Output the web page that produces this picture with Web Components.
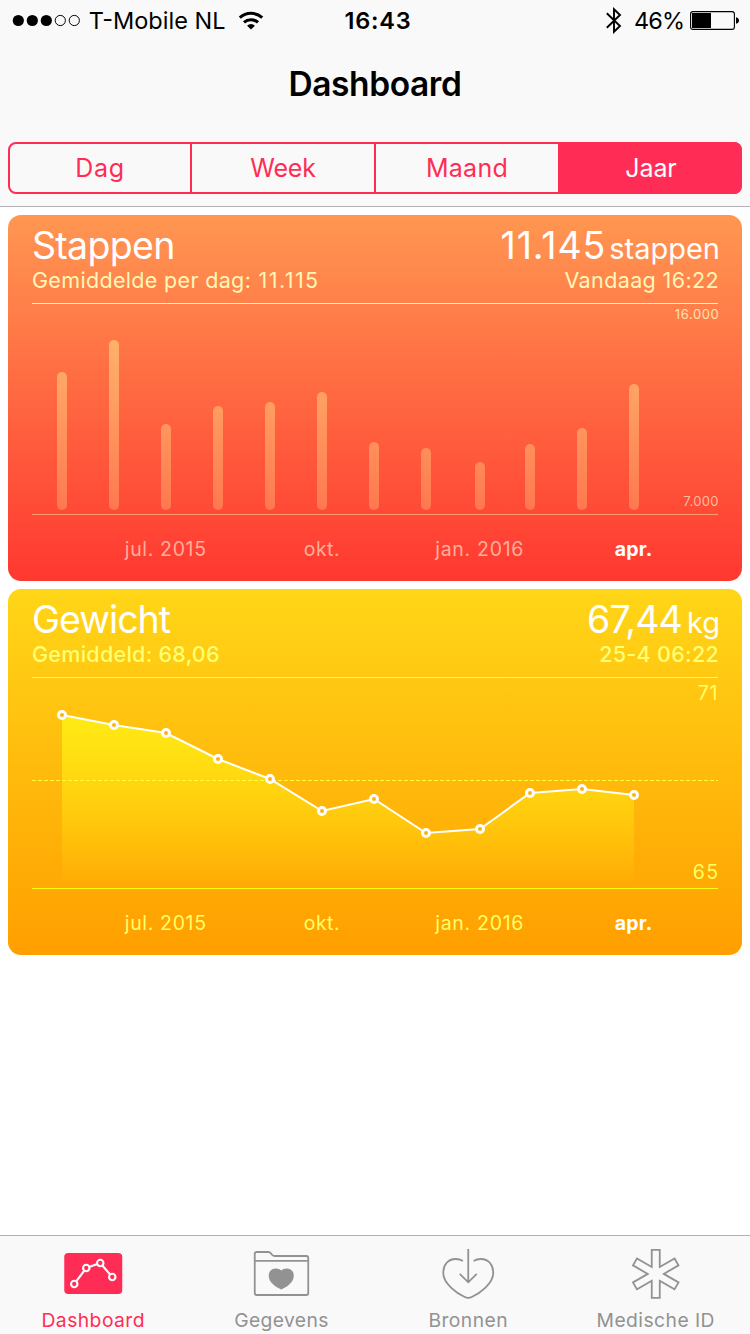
<!DOCTYPE html>
<html lang="nl">
<head>
  <meta charset="utf-8">
  <title>Dashboard</title>
  <style>
    body {
      margin: 0;
      background: #fff;
      font-family: Inter, "Liberation Sans", sans-serif;
    }
  </style>
</head>
<body>
  <health-app></health-app>

  <script>
    class StatusBar extends HTMLElement {
      constructor() {
        super();
        this.shadowDOM = this.attachShadow({mode: "open"});
      }
      connectedCallback() {
        this.render();
      }
      render() {
        this.shadowDOM.innerHTML = `
          <style>
            :host {
              display: grid;
              grid-template-columns: 1fr auto 1fr;
              align-items: center;
              height: 41px;
              padding: 0 11px 0 12px;
              font-size: 23.5px;
              line-height: 41px;
              color: #000;
            }
            div {
              display: flex;
              align-items: center;
            }
            svg {
              display: block;
              flex: none;
            }
            .carrier span {
              margin: 0 12.2px 0 7.8px;
            }
            .time {
              font-weight: 600;
              letter-spacing: .8px;
              margin-left: 5px;
            }
            .right {
              justify-content: flex-end;
            }
            .right span {
              letter-spacing: -0.8px;
              margin: 0 5.6px 0 12px;
            }
          </style>
          <div class="carrier">
            <svg width="69" height="13" viewBox="0 0 69 13">
              <circle cx="6.3" cy="6.5" r="5.6"/>
              <circle cx="20.3" cy="6.5" r="5.6"/>
              <circle cx="34.3" cy="6.5" r="5.6"/>
              <circle cx="48.3" cy="6.5" r="5.1" fill="none" stroke="#000"/>
              <circle cx="62.3" cy="6.5" r="5.1" fill="none" stroke="#000"/>
            </svg>
            <span>T-Mobile NL</span>
            <svg width="26" height="19" viewBox="0 0 26 19" fill="none" stroke="#000" stroke-width="3">
              <path d="M1.8 6.7A16.6 16.6 0 0 1 24.2 6.7"/>
              <path d="M6 11.4A10.4 10.4 0 0 1 20 11.4"/>
              <path d="M9.1 14.7A5.6 5.6 0 0 1 16.9 14.7L13 18.6Z" fill="#000" stroke="none"/>
            </svg>
          </div>
          <div class="time">16:43</div>
          <div class="right">
            <svg width="17" height="27" viewBox="0 0 17 27" fill="none" stroke="#000" stroke-width="1.9">
              <path d="M1.8 6.2L15 19L9 24.8V2.2L15 8L1.8 20.8"/>
            </svg>
            <span>46%</span>
            <svg width="49" height="19" viewBox="0 0 49 19">
              <rect x=".6" y=".6" width="43.8" height="17.8" rx="2.4" fill="none" stroke="#000" stroke-width="1.1"/>
              <rect x="2" y="2" width="19" height="15"/>
              <path d="M46 6.2Q49 7 49 9.5Q49 12 46 12.8Z"/>
            </svg>
          </div>
        `;
      }
    }
    customElements.define("status-bar", StatusBar);

    class PeriodPicker extends HTMLElement {
      constructor() {
        super();
        this.shadowDOM = this.attachShadow({mode: "open"});
      }
      connectedCallback() {
        this.render();
      }
      render() {
        this.shadowDOM.innerHTML = `
          <style>
            :host {
              display: grid;
              grid-template-columns: 180px 184px 184px 182px;
              box-sizing: border-box;
              height: 52px;
              border: 2px solid #ff2d55;
              border-radius: 8px;
              font-size: 25px;
              line-height: 48px;
              text-align: center;
              color: #ff2d55;
            }
            span + span {
              border-left: 2px solid #ff2d55;
            }
            span.selected {
              margin: -2px -2px -2px 0;
              border-radius: 0 8px 8px 0;
              line-height: 52px;
              background: #ff2d55;
              color: #fff;
            }
          </style>
          <span style="letter-spacing: .7px">Dag</span>
          <span style="letter-spacing: -.15px">Week</span>
          <span style="letter-spacing: .25px">Maand</span>
          <span class="selected" style="letter-spacing: -.1px">Jaar</span>
        `;
      }
    }
    customElements.define("period-picker", PeriodPicker);

    class HealthCard extends HTMLElement {
      constructor() {
        super();
        this.shadowDOM = this.attachShadow({mode: "open"});
      }
      connectedCallback() {
        this.render();
      }
      render() {
        this.shadowDOM.innerHTML = `
          <style>
            :host {
              display: flex;
              flex-direction: column;
              box-sizing: border-box;
              height: 366px;
              padding: 11px 24px 0;
              border-radius: 13px;
              background: linear-gradient(var(--from), var(--to));
              color: #fff;
            }
            .row {
              display: flex;
              justify-content: space-between;
              margin-right: -1px;
              white-space: nowrap;
            }
            .title {
              height: 40px;
              margin-right: -2px;
              line-height: 40px;
              font-size: 37.5px;
            }
            .sub {
              height: 28px;
              line-height: 28px;
              margin-bottom: 9px;
              font-size: 21.5px;
              font-weight: var(--sub-weight, 400);
              color: var(--sub);
            }
          </style>
          <div class="row title">
            <slot name="title"></slot>
            <slot name="value"></slot>
          </div>
          <div class="row sub">
            <slot name="average"></slot>
            <slot name="date"></slot>
          </div>
          <slot></slot>
        `;
      }
    }
    customElements.define("health-card", HealthCard);

    // x of every month, shared by both charts (card coordinates)
    const months = [54, 106, 158, 210, 262, 314, 366, 418, 472, 522, 574, 626];

    const chartStyle = `
      :host {
        display: block;
        height: 278px;
      }
      svg {
        display: block;
        overflow: visible;
      }
      text {
        font-size: 19.5px;
        fill: var(--label);
      }
      .now {
        font-weight: 700;
        fill: #fff;
      }
    `;

    const monthLabels = `
      <text x="116.8" y="341" letter-spacing=".65">jul. 2015</text>
      <text x="295.7" y="341" letter-spacing=".5">okt.</text>
      <text x="427.2" y="341" letter-spacing=".72">jan. 2016</text>
      <text class="now" x="606.8" y="341" letter-spacing=".22">apr.</text>
    `;

    class BarChart extends HTMLElement {
      constructor() {
        super();
        this.shadowDOM = this.attachShadow({mode: "open"});
      }
      connectedCallback() {
        this.render();
      }
      render() {
        const tops = [157, 125, 209, 191, 187, 177, 227, 233, 247, 229, 213, 169];
        const bars = tops.map((y, i) =>
          `<rect x="${months[i] - 5}" y="${y}" width="10" height="${295 - y}" rx="5" fill="url(#bar)"/>`
        ).join("");
        this.shadowDOM.innerHTML = `
          <style>
            ${chartStyle}
            .axis {
              font-size: 13px;
            }
          </style>
          <svg width="686" height="278" viewBox="24 88 686 278">
            <defs>
              <linearGradient id="bar" gradientUnits="userSpaceOnUse" x1="0" y1="125" x2="0" y2="295">
                <stop offset="0" stop-color="#ffff99" stop-opacity=".43"/>
                <stop offset="1" stop-color="#ffff99" stop-opacity=".25"/>
              </linearGradient>
            </defs>
            <rect x="24" y="88" width="686" height="1" fill="#ffff8c"/>
            ${bars}
            <rect x="24" y="299" width="686" height="1" fill="#ff9c6b"/>
            <text class="axis" x="666.8" y="104" letter-spacing=".6" style="fill: #ffe3b0">16.000</text>
            <text class="axis" x="675.3" y="291" letter-spacing=".35" style="fill: #ffbb9c">7.000</text>
            ${monthLabels}
          </svg>
        `;
      }
    }
    customElements.define("bar-chart", BarChart);

    class LineChart extends HTMLElement {
      constructor() {
        super();
        this.shadowDOM = this.attachShadow({mode: "open"});
      }
      connectedCallback() {
        this.render();
      }
      render() {
        const values = [126, 136, 144, 170, 190, 222, 210, 244, 240, 204, 200, 206];
        const points = values.map((y, i) => `${months[i]},${y}`).join(" ");
        const dots = values.map((y, i) =>
          `<circle cx="${months[i]}" cy="${y}" r="3.5" fill="#ffb20d" stroke="#fff" stroke-width="3"/>`
        ).join("");
        this.shadowDOM.innerHTML = `
          <style>${chartStyle}</style>
          <svg width="686" height="278" viewBox="24 88 686 278">
            <defs>
              <linearGradient id="area" gradientUnits="userSpaceOnUse" x1="0" y1="126" x2="0" y2="299">
                <stop offset="0" stop-color="#fff014" stop-opacity=".88"/>
                <stop offset="1" stop-color="#fff014" stop-opacity="0"/>
              </linearGradient>
            </defs>
            <rect x="24" y="88" width="686" height="1" fill="#ffff33"/>
            <polygon points="54,299 ${points} 626,299" fill="url(#area)"/>
            <path d="M24 191.5H710" stroke="#ffff33" stroke-dasharray="4 2"/>
            <polyline points="${points}" fill="none" stroke="#fff" stroke-width="2"/>
            ${dots}
            <rect x="24" y="299" width="686" height="1" fill="#ffff0d"/>
            <text x="689.8" y="111" letter-spacing=".6">71</text>
            <text x="684.8" y="290" letter-spacing="1.3">65</text>
            ${monthLabels}
          </svg>
        `;
      }
    }
    customElements.define("line-chart", LineChart);

    class TabItem extends HTMLElement {
      constructor() {
        super();
        this.shadowDOM = this.attachShadow({mode: "open"});
      }
      connectedCallback() {
        this.render();
      }
      render() {
        this.shadowDOM.innerHTML = `
          <style>
            :host {
              display: flex;
              flex: 1 1 0;
              flex-direction: column;
              align-items: center;
              padding-top: 10px;
              font-size: 19.3px;
              line-height: 24px;
              letter-spacing: .45px;
              white-space: nowrap;
              color: #929292;
            }
            :host([active]) {
              color: #ff2d55;
            }
            ::slotted(svg) {
              display: block;
              margin-bottom: 6px;
            }
            span {
              margin-right: var(--nudge, 1px);
            }
          </style>
          <slot name="icon"></slot>
          <span><slot></slot></span>
        `;
      }
    }
    customElements.define("tab-item", TabItem);

    class TabBar extends HTMLElement {
      constructor() {
        super();
        this.shadowDOM = this.attachShadow({mode: "open"});
      }
      connectedCallback() {
        this.render();
      }
      render() {
        this.shadowDOM.innerHTML = `
          <style>
            :host {
              display: flex;
              box-sizing: border-box;
              height: 99px;
              border-top: 1px solid #b2b2b2;
              background: #f9f9f9;
            }
          </style>
          <tab-item active>
            <svg slot="icon" width="60" height="56" viewBox="0 0 60 56">
              <g transform="translate(.25 0)" fill="#ff2d55" stroke="#fff" stroke-width="2.1">
                <rect y="7" width="58" height="41" rx="4" stroke="none"/>
                <path d="M10 38L22 22L36 17L48 31" fill="none"/>
                <circle cx="10" cy="38" r="3.2"/>
                <circle cx="22" cy="22" r="3.2"/>
                <circle cx="36" cy="17" r="3.2"/>
                <circle cx="48" cy="31" r="3.2"/>
              </g>
            </svg>
            Dashboard
          </tab-item>
          <tab-item style="letter-spacing: .37px; --nudge: -.5px">
            <svg slot="icon" width="60" height="56" viewBox="0 0 60 56">
              <g transform="translate(-.25 0)" fill="none" stroke="#929292" stroke-width="1.8">
                <path d="M4 8Q4 6 6 6H17.5Q19.3 6 20.2 7.4L21 8.6Q22 10 23.8 10H55.5Q57.5 10 57.5 12V47Q57.5 49 55.5 49H6Q4 49 4 47Z"/>
                <path d="M4 14.8H57"/>
                <path d="M30.5 24.4C33.5 21.2 43 21 43 30C43 37 35 41.5 30.5 43.4C26 41.5 18 37 18 30C18 21 27.5 21.2 30.5 24.4Z" fill="#929292" stroke="none"/>
              </g>
            </svg>
            Gegevens
          </tab-item>
          <tab-item>
            <svg slot="icon" width="60" height="56" viewBox="0 0 60 56">
              <g transform="translate(.25 0)" fill="none" stroke="#929292" stroke-width="1.8">
                <path d="M23.7 14.9Q20.5 13 16.5 13C8.5 13 4 19 4 27C4 37.5 17.5 47.3 25.5 51Q29 52.8 32.5 51C40.5 47.3 54 37.5 54 27C54 19 49.5 13 41.5 13Q37.5 13 34.3 14.9"/>
                <path d="M29 3V36M20.5 27.8L29 36.3L37.5 27.8"/>
              </g>
            </svg>
            Bronnen
          </tab-item>
          <tab-item>
            <svg slot="icon" width="60" height="56" viewBox="0 0 60 56">
              <path transform="translate(29.75 27.9)" fill="none" stroke="#929292" stroke-width="1.8"
                d="M-4 -6.93V-24H4V-6.93L18.78 -15.46L22.78 -8.54L8 0L22.78 8.54L18.78 15.46L4 6.93V24H-4V6.93L-18.78 15.46L-22.78 8.54L-8 0L-22.78 -8.54L-18.78 -15.46Z"/>
            </svg>
            Medische ID
          </tab-item>
        `;
      }
    }
    customElements.define("tab-bar", TabBar);

    class HealthApp extends HTMLElement {
      constructor() {
        super();
        this.shadowDOM = this.attachShadow({mode: "open"});
      }
      connectedCallback() {
        this.render();
      }
      render() {
        this.shadowDOM.innerHTML = `
          <style>
            :host {
              display: flex;
              flex-direction: column;
              width: 750px;
              height: 1334px;
              overflow: hidden;
            }
            header {
              box-sizing: border-box;
              height: 207px;
              border-bottom: 1px solid #b2b2b2;
              background: #f9f9f9;
            }
            h1 {
              margin: 0 0 15px;
              font-size: 33.5px;
              font-weight: 600;
              line-height: 86px;
              letter-spacing: -.4px;
              text-align: center;
              color: #000;
            }
            period-picker {
              margin: 0 8px;
            }
            main {
              display: flex;
              flex: 1;
              flex-direction: column;
              gap: 8px;
              padding: 8px;
            }
            .steps {
              --from: #ff9752;
              --to: #ff3830;
              --sub: #fff7b8;
              --label: #ffae9c;
            }
            .weight {
              --from: #ffd618;
              --to: #ff9f00;
              --sub: #ffff73;
              --sub-weight: 500;
              --label: #ffff66;
            }
            .unit {
              font-size: 29px;
            }
          </style>
          <header>
            <status-bar></status-bar>
            <h1>Dashboard</h1>
            <period-picker></period-picker>
          </header>
          <main>
            <health-card class="steps">
              <span slot="title" style="letter-spacing: -.7px">Stappen</span>
              <span slot="value"><span style="letter-spacing: .89px; margin-right: 3px">11.145</span><span class="unit">stappen</span></span>
              <span slot="average" style="letter-spacing: .33px">Gemiddelde per dag: <span style="letter-spacing: 1.45px; margin-left: 1px">11.115</span></span>
              <span slot="date" style="letter-spacing: .38px">Vandaag 16:22</span>
              <bar-chart></bar-chart>
            </health-card>
            <health-card class="weight">
              <span slot="title" style="letter-spacing: -.95px">Gewicht</span>
              <span slot="value"><span style="letter-spacing: -.83px; margin-right: 5px">67,44</span><span class="unit">kg</span></span>
              <span slot="average" style="letter-spacing: .28px">Gemiddeld: 68,06</span>
              <span slot="date" style="letter-spacing: .3px">25-4 06:22</span>
              <line-chart></line-chart>
            </health-card>
          </main>
          <tab-bar></tab-bar>
        `;
      }
    }
    customElements.define("health-app", HealthApp);
  </script>
</body>
</html>
